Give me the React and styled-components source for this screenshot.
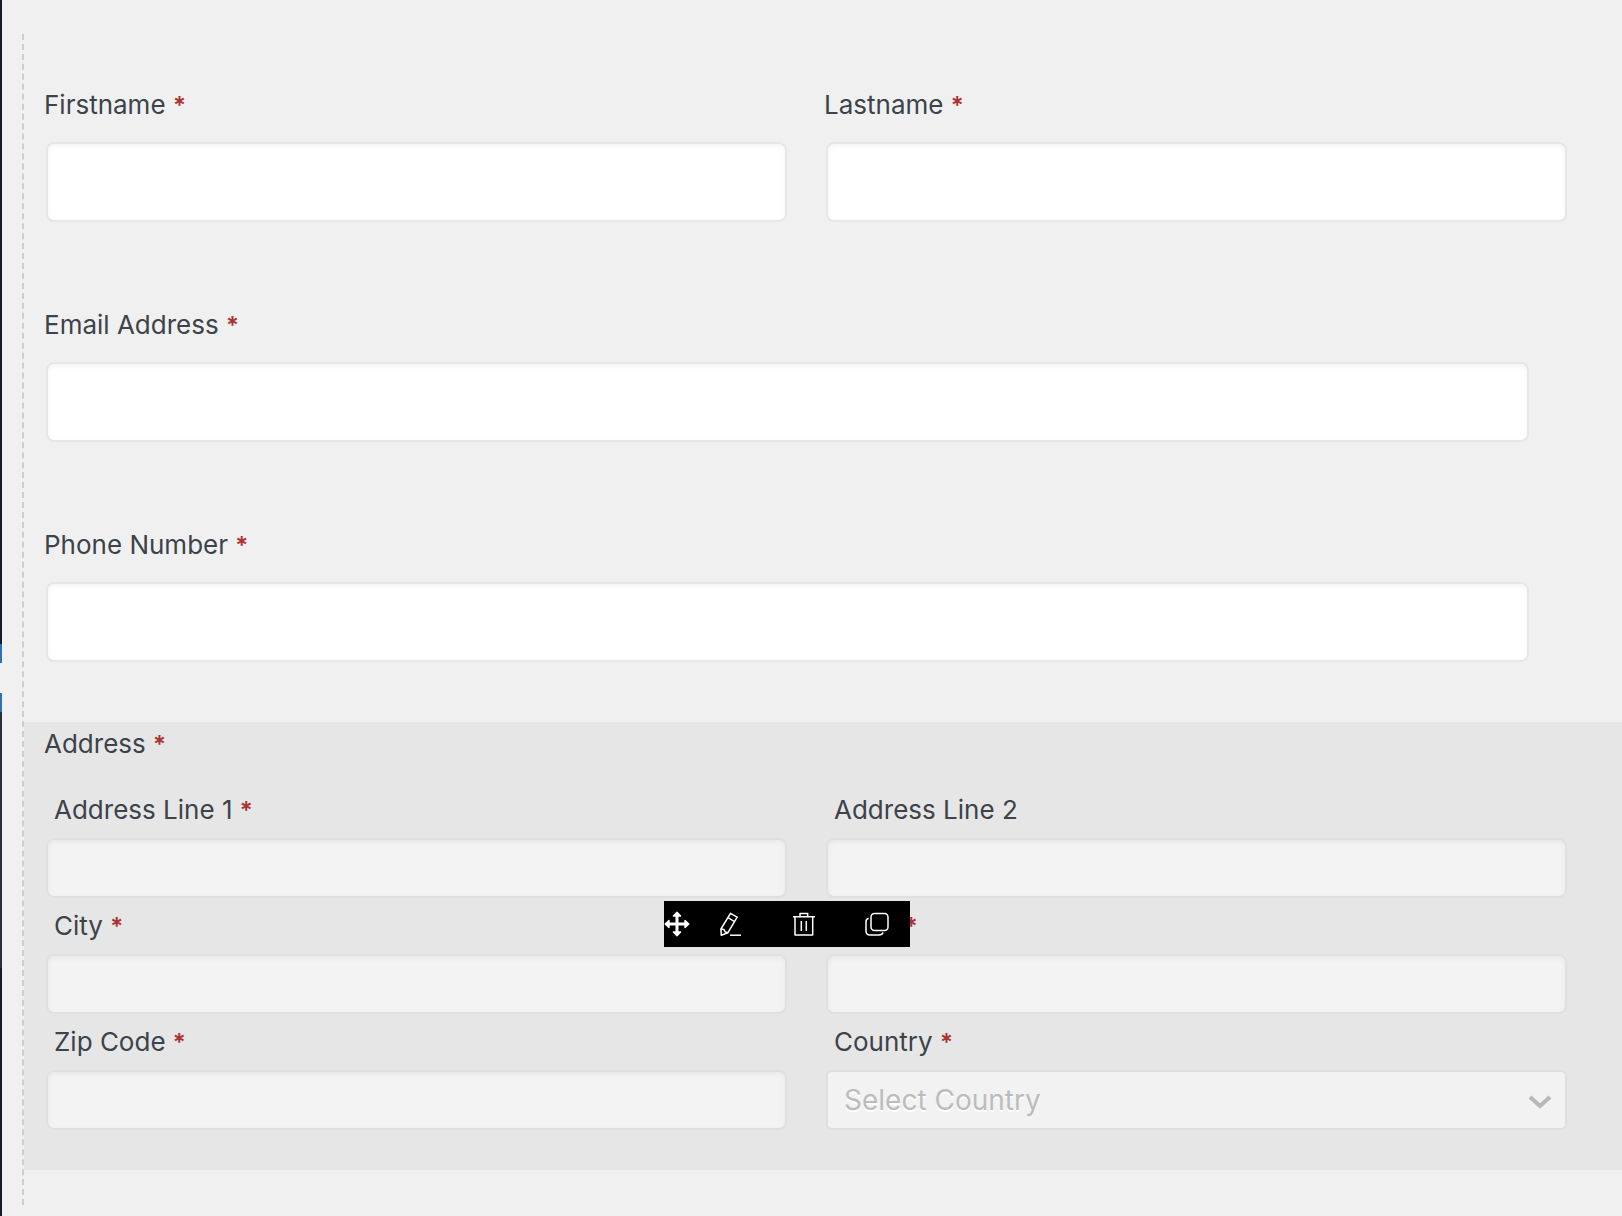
import React from 'react';
import styled, { createGlobalStyle } from 'styled-components';

const GlobalStyle = createGlobalStyle`
  *, *::before, *::after { box-sizing: border-box; }
  body {
    margin: 0;
    background: #f0f0f0;
    color: #3c434a;
    font-family: Inter, "Liberation Sans", sans-serif;
    font-size: 26px;
    line-height: 32px;
  }
`;

const Page = styled.div`
  display: flex;
  min-height: 100vh;
`;

/* Visible edge of the collapsed admin menu */
const MenuEdge = styled.div`
  display: flex;
  flex-direction: column;
  flex: none;
  width: 2px;
`;

const MenuSegment = styled.div`
  flex: ${(p) => (p.$height ? 'none' : '1')};
  height: ${(p) => (p.$height ? `${p.$height}px` : 'auto')};
  background: ${(p) => p.$color};
`;

const Canvas = styled.form`
  flex: 1;
  min-width: 0;
  margin: 34px 0 11px 20px;
  padding: 28px 0 35px;
  border-left: 2px dashed #cecece;
`;

const Row = styled.div`
  display: grid;
  grid-template-columns: ${(p) => (p.$single ? '1fr' : '1fr 1fr')};
  gap: 35px;
  padding: ${(p) => (p.$single ? '27px 91px 60px 20px' : '27px 53px 60px 20px')};
`;

const Field = styled.div`
  display: flex;
  flex-direction: column;
  gap: ${(p) => (p.$compact ? '12px' : '21px')};
`;

const Label = styled.label`
  padding-left: ${(p) => (p.$indent ? '10px' : '0')};
`;

const Required = styled.span`
  color: #a93232;
  font-size: 24px;
  font-weight: 600;
  line-height: 24px;
`;

const TextInput = styled.input`
  height: 80px;
  margin: 0 2px;
  padding: 0 16px;
  border: 2px solid #e6e6eb;
  border-radius: 8px;
  background: #fff;
  box-shadow: inset 0 2px 5px rgba(0, 0, 0, 0.05);
  color: inherit;
  font: inherit;
  font-size: 28px;

  &:disabled {
    height: 60px;
    border-color: #e0e0e0;
    background: #f3f3f3;
  }
`;

const SelectWrap = styled.div`
  position: relative;
  margin: 0 2px;
`;

const Select = styled.select`
  display: block;
  appearance: none;
  width: 100%;
  height: 60px;
  padding: 0 60px 0 16px;
  border: 2px solid #dfdfdf;
  border-radius: 6px;
  background: #f2f2f2;
  color: #bbbcbd;
  font: inherit;
  font-size: 28px;
  text-shadow: 0 2px 0 #fff;
  opacity: 1;
`;

const Chevron = styled.svg`
  position: absolute;
  right: 15px;
  top: 24px;
  pointer-events: none;
`;

const AddressGroup = styled.fieldset`
  position: relative;
  min-width: 0;
  margin: 0;
  padding: 6px 53px 40px 20px;
  border: 0;
  background: #e6e6e6;
`;

const Legend = styled.legend`
  float: left;
  width: 100%;
  margin-bottom: 34px;
  padding: 0;
`;

const AddressGrid = styled.div`
  clear: both;
  display: grid;
  grid-template-columns: 1fr 1fr;
  gap: 12px 35px;
`;

const Toolbar = styled.div`
  position: absolute;
  top: 179px;
  left: calc(50% - 159px);
  display: flex;
  align-items: center;
  height: 46px;
  padding-right: 21px;
  background: #000;
`;

const ToolGroup = styled.div`
  display: flex;
  gap: 49px;
  margin-left: 29px;
`;

const ToolButton = styled.button`
  display: block;
  padding: 0;
  border: 0;
  background: none;
  color: #fff;
  line-height: 0;
  cursor: pointer;
`;

const ToolIcon = ({ children }) => (
  <svg width="24" height="24" viewBox="0 0 24 24" fill="none" stroke="#fff" strokeWidth="1.5" strokeLinejoin="round" aria-hidden="true">
    {children}
  </svg>
);

const MoveIcon = () => (
  <svg width="26" height="26" viewBox="0 0 26 26" fill="#fff" stroke="#fff" strokeLinejoin="round" aria-hidden="true">
    <path d="M13 3 V23 M3 13 H23" strokeWidth="3" />
    <path
      d="M13 1.2 L16.6 5 H9.4 Z M13 24.8 L9.4 21 H16.6 Z M1.2 13 L5 9.4 V16.6 Z M24.8 13 L21 16.6 V9.4 Z"
      strokeWidth="1.4"
    />
  </svg>
);

const Star = () => <Required aria-hidden="true">*</Required>;

const TextField = ({ id, label, required = true, nested }) => (
  <Field $compact={nested}>
    <Label htmlFor={id} $indent={nested}>
      {label} {required && <Star />}
    </Label>
    <TextInput id={id} type="text" disabled={nested} />
  </Field>
);

export default function App() {
  return (
    <>
      <GlobalStyle />
      <Page>
        <MenuEdge>
          <MenuSegment $height={644} $color="#161b22" />
          <MenuSegment $height={19} $color="#2f70b5" />
          <MenuSegment $height={30} $color="#f0f0f0" />
          <MenuSegment $height={19} $color="#2f70b5" />
          <MenuSegment $height={256} $color="#292f35" />
          <MenuSegment $color="#161b22" />
        </MenuEdge>
        <Canvas>
          <Row>
            <TextField id="firstname" label="Firstname" />
            <TextField id="lastname" label="Lastname" />
          </Row>
          <Row $single>
            <TextField id="email" label="Email Address" />
          </Row>
          <Row $single>
            <TextField id="phone" label="Phone Number" />
          </Row>
          <AddressGroup>
            <Legend>
              Address <Star />
            </Legend>
            <AddressGrid>
              <TextField nested id="line1" label="Address Line 1" />
              <TextField nested id="line2" label="Address Line 2" required={false} />
              <TextField nested id="city" label="City" />
              <TextField nested id="state" label="State" />
              <TextField nested id="zip" label="Zip Code" />
              <Field $compact>
                <Label htmlFor="country" $indent>
                  Country <Star />
                </Label>
                <SelectWrap>
                  <Select id="country" disabled>
                    <option>Select Country</option>
                  </Select>
                  <Chevron width="24" height="16" viewBox="0 0 24 16" fill="none" stroke="#b6b8bb" strokeWidth="4" aria-hidden="true">
                    <path d="M2 3 L12 12 L22 3" />
                  </Chevron>
                </SelectWrap>
              </Field>
            </AddressGrid>
            <Toolbar role="toolbar" aria-label="Field actions">
              <ToolButton type="button" aria-label="Move">
                <MoveIcon />
              </ToolButton>
              <ToolGroup>
                <ToolButton type="button" aria-label="Edit">
                  <ToolIcon>
                    <path d="M11.5 1.3 L18.2 5.2 L8.8 20.8 L2.3 23.2 L1.9 17 Z" />
                    <path d="M9 5.7 L15.6 9.6 M1.9 17 L5 17.6 L6.2 20 L8.8 20.8" />
                    <path d="M11 23.2 H22" />
                  </ToolIcon>
                </ToolButton>
                <ToolButton type="button" aria-label="Delete">
                  <ToolIcon>
                    <path d="M1 4.7 H23 M8 4.7 V1.5 H15.7 V4.7" />
                    <path d="M3 4.7 V23 H20.7 V4.7" />
                    <path d="M9.3 9 V19 M14.3 9 V19" />
                  </ToolIcon>
                </ToolButton>
                <ToolButton type="button" aria-label="Duplicate">
                  <ToolIcon>
                    <rect x="6" y="1.5" width="17" height="17" rx="3.5" />
                    <path d="M3.6 6.2 C1.8 6.8 1 8 1 9.6 V19 C1 21.6 2.4 23 5 23 H14 C16.2 23 17.6 22 18 20.4" />
                  </ToolIcon>
                </ToolButton>
              </ToolGroup>
            </Toolbar>
          </AddressGroup>
        </Canvas>
      </Page>
    </>
  );
}
